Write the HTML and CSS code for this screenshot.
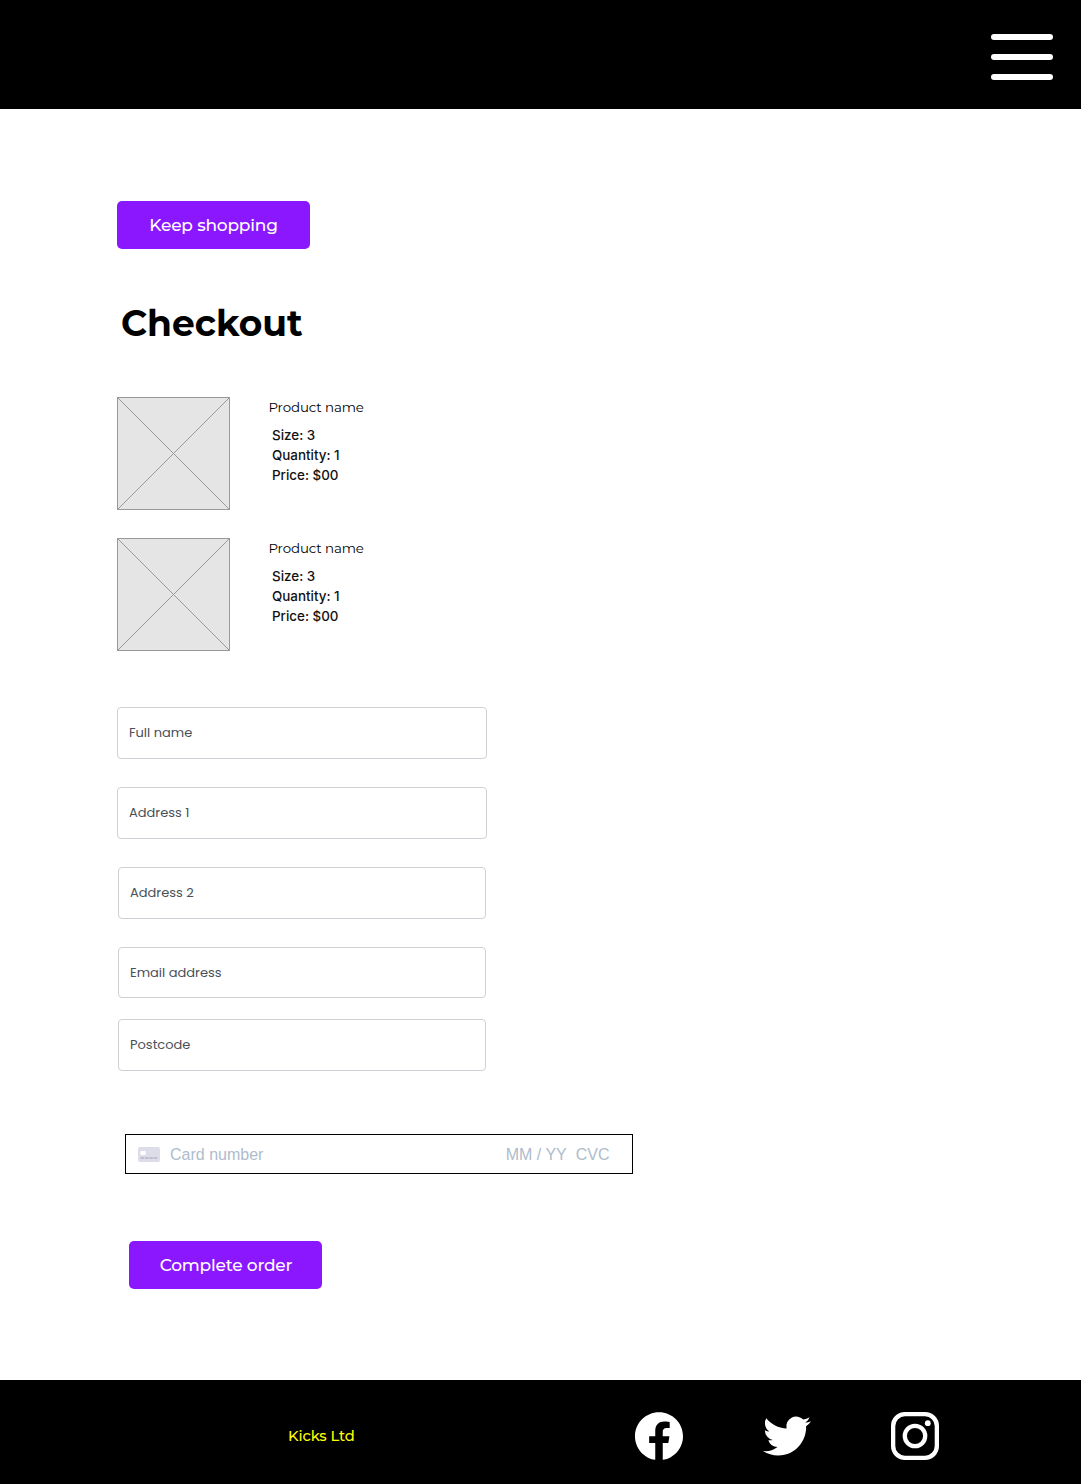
FILE: index.html
```html
<!DOCTYPE html>
<html lang="en">
<head>
<meta charset="utf-8">
<title>Checkout</title>
<link rel="stylesheet" href="styles.css">
</head>
<body>
<header class="header">
  <button class="menu" aria-label="Menu"><span class="bar"></span><span class="bar"></span><span class="bar"></span></button>
</header>
<main class="main">
  <button class="button">Keep shopping</button>
  <h1 class="title">Checkout</h1>
  <section class="products">
    <article class="product">
      <svg class="thumb" viewBox="0 0 113 113"><rect x=".5" y=".5" width="112" height="112"/><path d="M.5.5l112 112M112.5.5l-112 112"/></svg>
      <div class="info">
        <h2 class="name">Product name</h2>
        <p class="details">Size: 3<br>Quantity: 1<br>Price: $00</p>
      </div>
    </article>
    <article class="product">
      <svg class="thumb" viewBox="0 0 113 113"><rect x=".5" y=".5" width="112" height="112"/><path d="M.5.5l112 112M112.5.5l-112 112"/></svg>
      <div class="info">
        <h2 class="name">Product name</h2>
        <p class="details">Size: 3<br>Quantity: 1<br>Price: $00</p>
      </div>
    </article>
  </section>
  <form class="form">
    <div class="field">Full name</div>
    <div class="field">Address 1</div>
    <div class="field narrow">Address 2</div>
    <div class="field narrow short">Email address</div>
    <div class="field narrow">Postcode</div>
    <div class="card">
      <svg class="card-icon" viewBox="0 0 22 15"><rect width="22" height="15" rx="2" fill="#dcdde8"/><rect x="2.3" y="4" width="5.5" height="4" rx="1" fill="#fff"/><path d="M2.5 11h17" stroke="#b5b6c6" stroke-width="1.6" stroke-dasharray="3.6 .8"/></svg>
      <span class="card-number">Card number</span>
      <span class="expiry">MM / YY</span>
      <span class="cvc">CVC</span>
    </div>
    <button class="button submit" type="button">Complete order</button>
  </form>
</main>
<footer class="footer">
  <span class="company">Kicks Ltd</span>
  <nav class="social">
    <svg class="icon" viewBox="0 0 24 24"><path d="M24 12.073c0-6.627-5.373-12-12-12s-12 5.373-12 12c0 5.99 4.388 10.954 10.125 11.854v-8.385H7.078v-3.47h3.047V9.43c0-3.007 1.792-4.669 4.533-4.669 1.312 0 2.686.235 2.686.235v2.953H15.83c-1.491 0-1.956.925-1.956 1.874v2.25h3.328l-.532 3.47h-2.796v8.385C19.612 23.027 24 18.062 24 12.073z"/></svg>
    <svg class="icon" viewBox="0 0 24 24"><path d="M23.953 4.57a10 10 0 01-2.825.775 4.958 4.958 0 002.163-2.723c-.951.555-2.005.959-3.127 1.184a4.92 4.92 0 00-8.384 4.482C7.69 8.095 4.067 6.13 1.64 3.162a4.822 4.822 0 00-.666 2.475c0 1.71.87 3.213 2.188 4.096a4.904 4.904 0 01-2.228-.616v.06a4.923 4.923 0 003.946 4.827 4.996 4.996 0 01-2.212.085 4.936 4.936 0 004.604 3.417 9.867 9.867 0 01-6.102 2.105c-.39 0-.779-.023-1.17-.067a13.995 13.995 0 007.557 2.209c9.053 0 13.998-7.496 13.998-13.985 0-.21 0-.42-.015-.63A9.935 9.935 0 0024 4.59z"/></svg>
    <svg class="icon" viewBox="0 0 48 48"><g fill="none" stroke="#fff" stroke-width="4.3"><rect x="2.15" y="2.15" width="43.7" height="43.7" rx="11.8"/><circle cx="24" cy="24" r="10.2"/></g><circle cx="36.8" cy="11.2" r="2.9"/></svg>
  </nav>
</footer>
</body>
</html>
```
FILE: styles.css
```css
* { box-sizing: border-box; }

body {
  margin: 0;
  min-height: 1484px;
  display: flex;
  flex-direction: column;
  background: #fff;
  color: #000;
  font-family: Montserrat, Inter, sans-serif;
}

.header {
  height: 109px;
  padding: 34px 28px 0 0;
  display: flex;
  justify-content: flex-end;
  align-items: flex-start;
  background: #000;
}

.menu {
  width: 62px;
  padding: 0;
  border: 0;
  display: flex;
  flex-direction: column;
  gap: 14px;
  background: none;
}

.bar {
  height: 6px;
  border-radius: 3px;
  background: #fff;
}

.main {
  height: 1271px;
  padding: 92px 117px 0;
}

.button {
  display: block;
  width: 193px;
  height: 48px;
  padding: 0;
  border: 0;
  border-radius: 5px;
  background: #8b17ff;
  color: #fff;
  font: 500 17px/48px Montserrat, Inter, sans-serif;
  letter-spacing: -0.2px;
}

.title {
  margin: 52px 0 0 4px;
  font-size: 36px;
  line-height: 44px;
  font-weight: 700;
}

.products {
  margin-top: 52px;
  display: flex;
  flex-direction: column;
  gap: 28px;
}

.product {
  display: flex;
  gap: 38px;
  height: 113px;
}

.thumb {
  width: 113px;
  height: 113px;
  fill: #e5e5e5;
  stroke: #999;
  stroke-width: 1;
}

.name {
  margin: 0 0 0 0.4px;
  font-size: 13.4px;
  line-height: 20px;
  font-weight: 400;
  letter-spacing: -0.12px;
}

.details {
  margin: 8px 0 0 4px;
  color: #111;
  font: 500 13.4px/20.2px Inter, sans-serif;
}

.form { margin-top: 56px; }

.field {
  width: 370px;
  height: 52px;
  margin-bottom: 28px;
  padding-left: 11px;
  border: 1px solid #ced0d6;
  border-radius: 4px;
  color: #495057;
  font: 400 13px/50px Poppins, Inter, sans-serif;
}

.narrow {
  width: 368px;
  margin-left: 1px;
}

.short {
  height: 51px;
  margin-bottom: 21px;
}

.card {
  width: 508px;
  height: 40px;
  margin: 63px 0 0 8px;
  padding: 0 22.5px 0 12px;
  display: flex;
  align-items: center;
  border: 1px solid #000;
  color: #aebccb;
  font: 400 16px/36px "Liberation Sans", sans-serif;
}

.card span { padding-top: 2px; }

.card-icon {
  width: 22px;
  height: 15px;
  margin-right: 10px;
}

.expiry {
  margin-left: auto;
  margin-right: 9px;
}

.submit {
  margin: 67px 0 0 12px;
  padding-left: 1px;
}

.footer {
  height: 104px;
  padding: 0 142px 0 288px;
  display: flex;
  justify-content: space-between;
  align-items: center;
  background: #000;
}

.company {
  padding-top: 8px;
  color: #ff0;
  font-size: 14.7px;
  font-weight: 500;
  letter-spacing: -0.1px;
}

.social {
  display: flex;
  gap: 80px;
  padding-top: 8px;
}

.icon {
  width: 48px;
  height: 48px;
  fill: #fff;
}
```
